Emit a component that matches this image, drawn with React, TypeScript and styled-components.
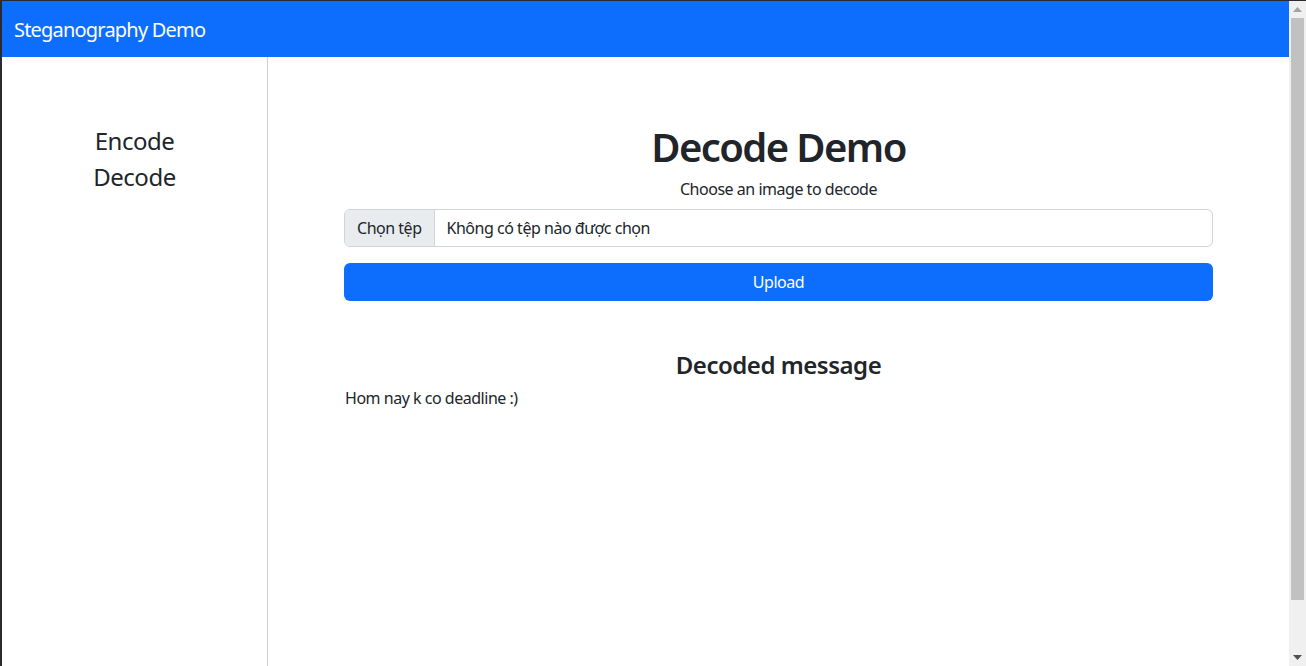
import React from "react";
import styled, { createGlobalStyle } from "styled-components";

const Global = createGlobalStyle`
  html, body { margin: 0; padding: 0; background: #2b2a2e; overflow: hidden; }
  body { font-family: "Segoe UI", "Noto Sans", "Liberation Sans", sans-serif; color: #212529; letter-spacing: -0.03em; }
  * { box-sizing: border-box; }
`;

const Frame = styled.div`
  height: 666px;
  padding: 1px 0 0 2px;
  display: flex;
`;

const Window = styled.div`
  flex: 1;
  display: flex;
  background: #fff;
  min-width: 0;
`;

const Page = styled.div`
  flex: 1;
  display: flex;
  flex-direction: column;
  min-width: 0;
`;

const Navbar = styled.nav`
  height: 56px;
  background: #0d6efd;
  display: flex;
  align-items: center;
  padding-left: 12px;
`;

const Brand = styled.span`
  color: #fff;
  font-size: 20px;
  letter-spacing: -0.04em;
`;

const Body = styled.div`
  flex: 1;
  display: flex;
`;

const Sidebar = styled.aside`
  width: 266px;
  border-right: 1px solid #cfcfcf;
  display: flex;
  flex-direction: column;
  align-items: center;
  padding-top: 66px;
`;

const NavLink = styled.a`
  font-size: 24px;
  line-height: 36px;
  color: #212529;
  text-decoration: none;
`;

const Main = styled.main`
  flex: 1;
  display: flex;
  justify-content: center;
  padding-top: 66px;
`;

const Container = styled.div`
  width: 869px;
  display: flex;
  flex-direction: column;
`;

const Title = styled.h1`
  margin: 0 0 6px;
  font-size: 40px;
  font-weight: 600;
  line-height: 48px;
  text-align: center;
  letter-spacing: -0.04em;
`;

const Hint = styled.p`
  margin: 0 0 8px;
  font-size: 16px;
  line-height: 24px;
  text-align: center;
`;

const FileGroup = styled.div`
  display: flex;
  height: 38px;
  border: 1px solid #ced4da;
  border-radius: 6px;
  overflow: hidden;
  font-size: 16px;
`;

const FileButton = styled.span`
  background: #e9ecef;
  border-right: 1px solid #ced4da;
  padding: 0 12px;
  display: flex;
  align-items: center;
`;

const FileName = styled.span`
  padding: 0 12px;
  display: flex;
  align-items: center;
`;

const Upload = styled.button`
  margin-top: 16px;
  height: 38px;
  border: none;
  border-radius: 6px;
  background: #0d6efd;
  color: #fff;
  font: inherit;
  font-size: 16px;
  letter-spacing: -0.03em;
`;

const SubTitle = styled.h4`
  margin: 49px 0 7px;
  font-size: 24px;
  font-weight: 600;
  line-height: 29px;
  text-align: center;
`;

const Message = styled.p`
  margin: 0;
  padding-left: 1px;
  font-size: 16px;
  line-height: 24px;
`;

const Scrollbar = styled.div`
  width: 17px;
  background: #f0f0f0;
  display: flex;
  flex-direction: column;
  align-items: center;
`;

const Arrow = styled.div`
  height: 17px;
  width: 17px;
  display: flex;
  align-items: center;
  justify-content: center;
`;

const Thumb = styled.div`
  width: 13px;
  height: 582px;
  background: #c1c1c1;
`;

const Spacer = styled.div`
  flex: 1;
`;

export default function App() {
  return (
    <>
      <Global />
      <Frame>
        <Window>
          <Page>
            <Navbar>
              <Brand>Steganography Demo</Brand>
            </Navbar>
            <Body>
              <Sidebar>
                <NavLink href="#">Encode</NavLink>
                <NavLink href="#">Decode</NavLink>
              </Sidebar>
              <Main>
                <Container>
                  <Title>Decode Demo</Title>
                  <Hint>Choose an image to decode</Hint>
                  <FileGroup>
                    <FileButton>Chọn tệp</FileButton>
                    <FileName>Không có tệp nào được chọn</FileName>
                  </FileGroup>
                  <Upload>Upload</Upload>
                  <SubTitle>Decoded message</SubTitle>
                  <Message>Hom nay k co deadline :)</Message>
                </Container>
              </Main>
            </Body>
          </Page>
          <Scrollbar>
            <Arrow>
              <svg width="9" height="5" viewBox="0 0 9 5"><path d="M0 5 L4.5 0 L9 5 Z" fill="#a3a3a3" /></svg>
            </Arrow>
            <Thumb />
            <Spacer />
            <Arrow>
              <svg width="9" height="5" viewBox="0 0 9 5"><path d="M0 0 L9 0 L4.5 5 Z" fill="#505050" /></svg>
            </Arrow>
          </Scrollbar>
        </Window>
      </Frame>
    </>
  );
}
